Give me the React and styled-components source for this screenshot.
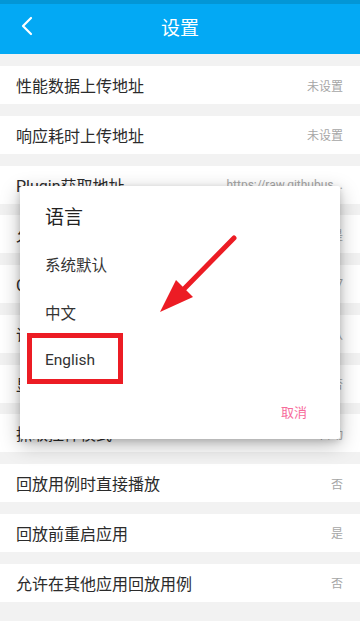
import styled, { createGlobalStyle } from "styled-components";

const rows = [
  { label: "性能数据上传地址", value: "未设置" },
  { label: "响应耗时上传地址", value: "未设置" },
  { label: "Plugin获取地址", value: "https://raw.githubus..." },
  { label: "允许上传数据", value: "是" },
  { label: "Chrome版本", value: "57" },
  { label: "语言", value: "系统默认" },
  { label: "显示悬浮窗", value: "否" },
  { label: "抓取控件模式", value: "自动" },
  { label: "回放用例时直接播放", value: "否" },
  { label: "回放前重启应用", value: "是" },
  { label: "允许在其他应用回放用例", value: "否" },
];

const languages = ["系统默认", "中文", "English"];

function App() {
  return (
    <>
      <GlobalStyle />
      <Page>
        <Header>
          <Back>
            <svg width="12" height="20" viewBox="0 0 12 20">
              <path d="M10 2 L2 10 L10 18" fill="none" stroke="#fff" strokeWidth="2.2" strokeLinecap="round" strokeLinejoin="round" />
            </svg>
          </Back>
          <Title>设置</Title>
        </Header>
        <List>
          {rows.map((r) => (
            <Row key={r.label}>
              <Label>{r.label}</Label>
              <Value>{r.value}</Value>
            </Row>
          ))}
        </List>

        <Dialog>
          <DialogTitle>语言</DialogTitle>
          {languages.map((l) => (
            <Option key={l}>{l}</Option>
          ))}
          <Actions>
            <Cancel>取消</Cancel>
          </Actions>
          <Highlight />
        </Dialog>

        <Arrow width="360" height="621" viewBox="0 0 360 621">
          <line x1="234" y1="238" x2="183" y2="290" stroke="#ec1c24" strokeWidth="5" strokeLinecap="round" />
          <polygon points="160,312 176,280 193,297" fill="#ec1c24" />
        </Arrow>
      </Page>
    </>
  );
}

export default App;

const GlobalStyle = createGlobalStyle`
  html, body {
    margin: 0;
    padding: 0;
    background: #f2f2f2;
  }
  body {
    font-family: Roboto, "Noto Sans CJK SC", sans-serif;
  }
`;

const Page = styled.div`
  position: relative;
  width: 360px;
  height: 621px;
  overflow: hidden;
  background: #f2f2f2;
`;

const Header = styled.div`
  height: 50px;
  border-top: 4px solid #0396d6;
  background: #03a9f4;
  display: flex;
  align-items: center;
  justify-content: center;
  position: relative;
`;

const Back = styled.div`
  position: absolute;
  left: 21px;
  top: 12px;
  display: flex;
`;

const Title = styled.div`
  color: #fff;
  font-size: 19px;
  line-height: 24px;
`;

const List = styled.div`
  display: flex;
  flex-direction: column;
  gap: 11.75px;
  padding-top: 12px;
`;

const Row = styled.div`
  height: 38px;
  background: #fff;
  display: flex;
  align-items: center;
  justify-content: space-between;
  padding: 0 17px 0 16px;
  gap: 20px;
`;

const Label = styled.div`
  font-size: 16px;
  color: #2b2b2b;
  white-space: nowrap;
`;

const Value = styled.div`
  font-size: 12px;
  color: #a6a6a6;
  white-space: nowrap;
`;

const Dialog = styled.div`
  position: absolute;
  left: 20px;
  top: 186px;
  width: 320px;
  height: 253px;
  background: #fff;
  border-radius: 2px;
  box-shadow: 0 6px 20px rgba(0, 0, 0, 0.28), 0 2px 6px rgba(0, 0, 0, 0.15);
  display: flex;
  flex-direction: column;
`;

const DialogTitle = styled.div`
  height: 54px;
  padding: 20px 0 0 25px;
  box-sizing: border-box;
  font-size: 19px;
  line-height: 24px;
  color: #222;
`;

const Option = styled.div`
  height: 48px;
  display: flex;
  align-items: center;
  padding-left: 25px;
  font-size: 15.5px;
  color: #333;
`;

const Actions = styled.div`
  flex: 1;
  display: flex;
  align-items: center;
  justify-content: flex-end;
  padding-right: 33px;
`;

const Cancel = styled.div`
  font-size: 13px;
  color: #f76b9b;
`;

const Highlight = styled.div`
  position: absolute;
  left: 7px;
  top: 147px;
  width: 96px;
  height: 51px;
  box-sizing: border-box;
  border: 5px solid #ec1c24;
`;

const Arrow = styled.svg`
  position: absolute;
  left: 0;
  top: 0;
  pointer-events: none;
`;
